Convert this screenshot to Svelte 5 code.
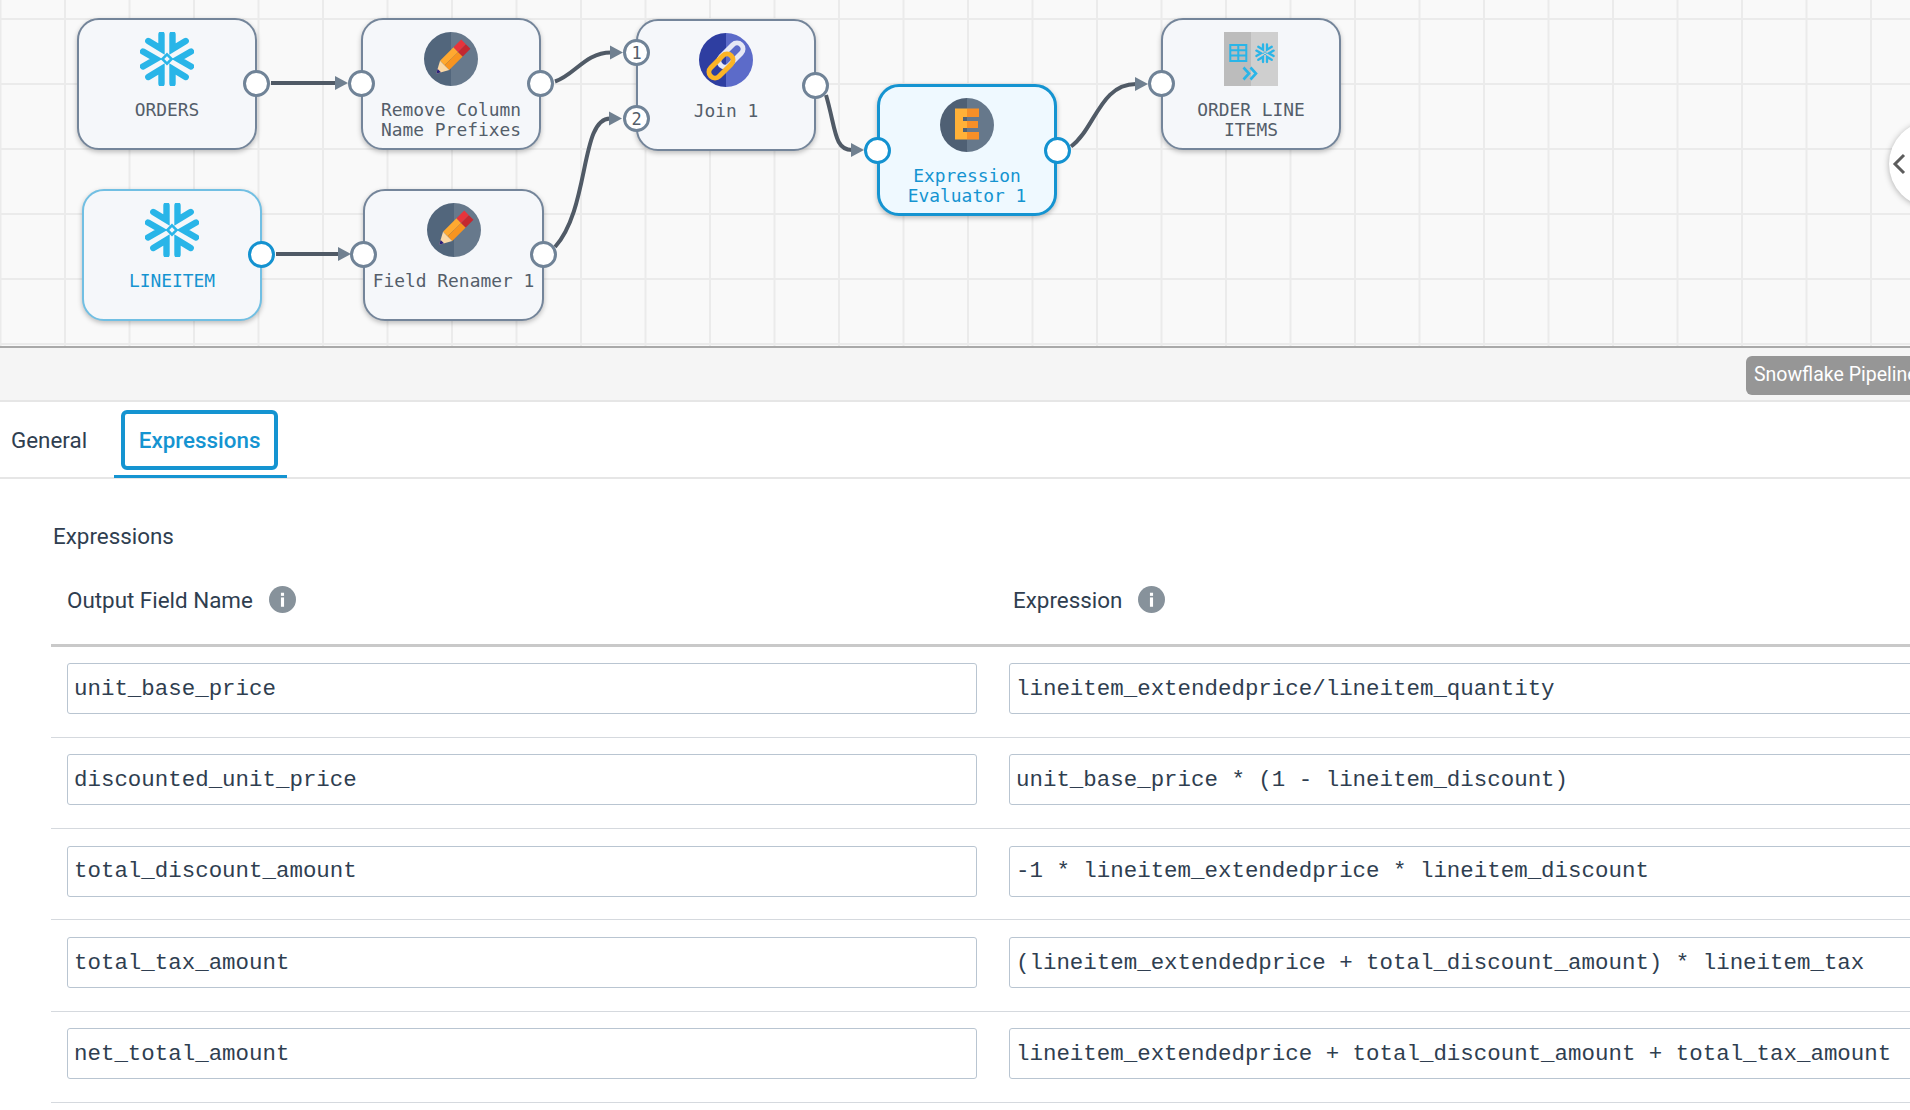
<script lang="ts">
	type Node = { x: number; y: number; w: number; h: number; lines: string[]; icon: string; state?: string };
	type Port = { x: number; y: number; label?: string; state?: string };

	const nodes: Node[] = [
		{ x: 77, y: 18, w: 180, h: 132, lines: ['ORDERS'], icon: 'snow' },
		{ x: 361, y: 18, w: 180, h: 132, lines: ['Remove Column', 'Name Prefixes'], icon: 'pencil' },
		{ x: 82, y: 189, w: 180, h: 132, lines: ['LINEITEM'], icon: 'snow', state: 'picked' },
		{ x: 363, y: 189, w: 181, h: 132, lines: ['Field Renamer 1'], icon: 'pencil' },
		{ x: 636, y: 19, w: 180, h: 132, lines: ['Join 1'], icon: 'join' },
		{ x: 877, y: 84, w: 180, h: 132, lines: ['Expression', 'Evaluator 1'], icon: 'expr', state: 'active' },
		{ x: 1161, y: 18, w: 180, h: 132, lines: ['ORDER LINE', 'ITEMS'], icon: 'target' }
	];

	const ports: Port[] = [
		{ x: 256.5, y: 83 },
		{ x: 361.5, y: 83 },
		{ x: 540.5, y: 83 },
		{ x: 261.5, y: 254, state: 'active' },
		{ x: 363.5, y: 254 },
		{ x: 543.5, y: 254 },
		{ x: 636.5, y: 52.5, label: '1' },
		{ x: 636.5, y: 118.5, label: '2' },
		{ x: 815, y: 85 },
		{ x: 877.5, y: 150, state: 'active' },
		{ x: 1057, y: 150, state: 'active' },
		{ x: 1161, y: 83 }
	];

	const edges = [
		'M271 83 L336 83',
		'M276 254 L339 254',
		'M555 81.5 C575 75 585 52.5 611 52.5',
		'M555 247 C590 208 580 118.5 610 118.5',
		'M826 95 C836 129 834 150 852 150',
		'M1071 146.5 C1095 129 1100 84 1136 84'
	];

	const arrows = [
		[335, 83],
		[338, 254],
		[610, 52.5],
		[609, 118.5],
		[851, 150],
		[1135, 84]
	];

	const rows = [
		['unit_base_price', 'lineitem_extendedprice/lineitem_quantity'],
		['discounted_unit_price', 'unit_base_price * (1 - lineitem_discount)'],
		['total_discount_amount', '-1 * lineitem_extendedprice * lineitem_discount'],
		['total_tax_amount', '(lineitem_extendedprice + total_discount_amount) * lineitem_tax'],
		['net_total_amount', 'lineitem_extendedprice + total_discount_amount + total_tax_amount']
	];

	const flake = [
		'M-18.7 -18 L-5.5 -10 L-5.5 -24.5',
		'M18.7 -18 L5.5 -10 L5.5 -24.5',
		'M-18.7 18 L-5.5 10 L-5.5 24.5',
		'M18.7 18 L5.5 10 L5.5 24.5',
		'M-24 -7.5 L-11 0 L-24 7.5',
		'M24 -7.5 L11 0 L24 7.5'
	];
</script>

{#snippet snowflake(scale: number, cx: number, cy: number)}
	<g transform="translate({cx} {cy}) scale({scale})">
		{#each flake as d}
			<path {d} fill="none" stroke="#29b5e8" stroke-width="6.4" stroke-linecap="round" stroke-linejoin="miter" />
		{/each}
		<path d="M0 -4.6 L4.6 0 L0 4.6 L-4.6 0 Z" fill="none" stroke="#29b5e8" stroke-width="2.6" />
	</g>
{/snippet}

{#snippet halfDisc(left: string, right: string)}
	<path d="M27 0 A27 27 0 0 0 27 54 Z" fill={left} />
	<path d="M27 0 A27 27 0 0 1 27 54 Z" fill={right} />
{/snippet}

{#snippet nodeIcon(kind: string)}
	<svg class="icon" width="54" height="54" viewBox="0 0 54 54">
		{#if kind === 'snow'}
			{@render snowflake(1, 27, 27)}
		{:else if kind === 'pencil'}
			{@render halfDisc('#52667c', '#67798c')}
			<g transform="translate(27 27) rotate(-45)">
				<path d="M-9 -6.5 L10 -6.5 L10 0 L-9 0 Z" fill="#ffa930" />
				<path d="M-9 0 L10 0 L10 6.5 L-9 6.5 Z" fill="#f8941f" />
				<path d="M10 -6.5 L21 -6.5 L21 0 L10 0 Z" fill="#e8343b" />
				<path d="M10 0 L21 0 L21 6.5 L10 6.5 Z" fill="#c4282f" />
				<path d="M-9 -6.5 L-9 6.5 L-21 0 Z" fill="#fbd8a5" />
				<path d="M-16.5 -2.4 L-16.5 2.4 L-21 0 Z" fill="#2a1f7c" />
			</g>
		{:else if kind === 'join'}
			{@render halfDisc('#2e3ea1', '#5c6bc9')}
			<rect x="26" y="7.5" width="12" height="29" rx="6" transform="rotate(45 32 22)" fill="none" stroke="#e6e8f5" stroke-width="5" />
			<rect x="16" y="18.5" width="12" height="29" rx="6" transform="rotate(45 22 33)" fill="none" stroke="#fcb426" stroke-width="5" />
		{:else if kind === 'expr'}
			{@render halfDisc('#4f6074', '#66788b')}
			<path d="M15 10.5 H27 V41.5 H15 Z" fill="#ffb138" />
			<path d="M27 10.5 H39 V19 H27 Z M27 23 H38 V30 H27 Z M27 34 H39 V41.5 H27 Z" fill="#f78f27" />
			<path d="M23 19 H27 V23 H23 Z M23 30 H27 V34 H23 Z" fill="#4f6074" />
		{:else}
			<rect width="27" height="54" fill="#bcbcbc" />
			<rect x="27" width="27" height="54" fill="#cfcfcf" />
			<g fill="none" stroke="#29b5e8" stroke-width="2">
				<rect x="6.3" y="13" width="16" height="16" />
				<path d="M6.3 18.3 H22.3 M6.3 23.6 H22.3 M14.3 13 V29" />
			</g>
			{@render snowflake(0.36, 41, 21.3)}
			<path d="M19.5 35.5 L25 41.5 L19.5 47.5 M26.5 35.5 L32 41.5 L26.5 47.5" fill="none" stroke="#29b5e8" stroke-width="2.6" />
		{/if}
	</svg>
{/snippet}

{#snippet info()}
	<svg class="info" width="27" height="27" viewBox="0 0 26 26">
		<circle cx="13" cy="13" r="13" fill="#87929b" />
		<rect x="11.5" y="11" width="3" height="9" fill="#fff" />
		<rect x="11.5" y="6.5" width="3" height="3" fill="#fff" />
	</svg>
{/snippet}

<div class="page">
	<section class="canvas">
		<svg class="edges" width="1910" height="347">
			{#each edges as d}
				<path {d} fill="none" stroke="#505a66" stroke-width="4" />
			{/each}
			{#each arrows as [x, y]}
				<path d="M{x} {y - 7} L{x + 13} {y} L{x} {y + 7} Z" fill="#708090" />
			{/each}
		</svg>

		{#each nodes as n}
			<div class="node {n.state ?? ''}" style="left:{n.x}px;top:{n.y}px;width:{n.w}px;height:{n.h}px">
				{@render nodeIcon(n.icon)}
				<div class="label">
					{#each n.lines as line}
						<div>{line}</div>
					{/each}
				</div>
			</div>
		{/each}

		{#each ports as p}
			<div class="port {p.state ?? ''}" style="left:{p.x}px;top:{p.y}px">{p.label ?? ''}</div>
		{/each}

		<button class="collapse" aria-label="Collapse">
			<svg width="14" height="22" viewBox="0 0 14 22">
				<path d="M12 2 L3 11 L12 20" fill="none" stroke="#5c5c5c" stroke-width="3" />
			</svg>
		</button>
	</section>

	<div class="band">
		<span class="badge">Snowflake Pipeline</span>
	</div>

	<nav class="tabs">
		<button class="tab">General</button>
		<button class="tab selected"><span>Expressions</span></button>
	</nav>

	<main class="content">
		<h2>Expressions</h2>
		<div class="row head">
			<div class="cell">Output Field Name {@render info()}</div>
			<div class="cell">Expression {@render info()}</div>
		</div>
		{#each rows as [name, expr]}
			<div class="row">
				<input value={name} readonly />
				<input class="wide" value={expr} readonly />
			</div>
		{/each}
	</main>
</div>

<style>
	:global(body) {
		margin: 0;
		overflow: hidden;
		background: #fff;
	}

	.page {
		width: 1910px;
		height: 1110px;
		overflow: hidden;
		font-family: Roboto, sans-serif;
		color: #2f3e50;
	}

	/* ── canvas ── */
	.canvas {
		position: relative;
		height: 346px;
		overflow: hidden;
		border-bottom: 2px solid #a9a9a9;
		background-color: #f9f9f9;
		background-image:
			linear-gradient(to right, #ebebeb 2px, transparent 2px),
			linear-gradient(to bottom, #ebebeb 2px, transparent 2px);
		background-size: 64.5px 65px;
		background-position: 64px 18px;
	}

	.edges {
		position: absolute;
		inset: 0;
	}

	.node {
		position: absolute;
		box-sizing: border-box;
		display: flex;
		flex-direction: column;
		align-items: center;
		padding-top: 12px;
		background: #f5f7fa;
		border: 2px solid #74859a;
		border-radius: 22px;
		box-shadow: 0 2px 5px rgba(0, 0, 0, 0.25);
	}

	.node.picked {
		border-color: #71bfe3;
	}

	.node.active {
		background: #eff9ff;
		border: 3px solid #1594d1;
		padding-top: 11px;
	}

	.icon {
		flex-shrink: 0;
	}

	.label {
		margin-top: 14px;
		font-family: 'DejaVu Sans Mono', monospace;
		font-size: 17.9px;
		line-height: 20.2px;
		text-align: center;
		white-space: nowrap;
		color: #545e6a;
	}

	.picked .label,
	.active .label {
		color: #1594d1;
	}

	.port {
		position: absolute;
		box-sizing: border-box;
		width: 27px;
		height: 27px;
		margin: -13.5px 0 0 -13.5px;
		display: flex;
		align-items: center;
		justify-content: center;
		background: #fff;
		border: 3px solid #708397;
		border-radius: 50%;
		font-family: 'DejaVu Sans Mono', monospace;
		font-size: 17px;
		color: #545e6a;
	}

	.port.active {
		border-color: #1492d0;
	}

	.collapse {
		position: absolute;
		left: 1889px;
		top: 121px;
		width: 86px;
		height: 86px;
		padding: 0 0 0 3px;
		display: flex;
		align-items: center;
		background: #fff;
		border: none;
		border-radius: 50%;
		box-shadow: 0 1px 6px rgba(0, 0, 0, 0.3);
	}

	/* ── band ── */
	.band {
		height: 52px;
		display: flex;
		align-items: center;
		justify-content: flex-end;
		background: #f5f5f5;
		border-bottom: 2px solid #e6e6e6;
		overflow: hidden;
	}

	.badge {
		flex-shrink: 0;
		box-sizing: border-box;
		width: 200px;
		margin: 2px -36px 0 0;
		height: 39px;
		line-height: 38px;
		padding-left: 8px;
		background: #969696;
		border-radius: 6px;
		color: #fff;
		font-size: 19.5px;
		white-space: nowrap;
	}

	/* ── tabs ── */
	.tabs {
		height: 77px;
		display: flex;
		box-sizing: border-box;
		border-bottom: 2px solid #e6e6e6;
	}

	.tab {
		padding: 0 11px;
		height: 76px;
		margin-right: 16px;
		background: none;
		border: none;
		font: 400 22.4px Roboto, sans-serif;
		color: #2f3e50;
	}

	.tab.selected {
		box-sizing: border-box;
		width: 173px;
		padding: 8px 9px 5px 7px;
		margin-right: 0;
		color: #1594d1;
		font-weight: 500;
		border-bottom: 3px solid #1594d1;
	}

	.tab.selected span {
		display: flex;
		align-items: center;
		justify-content: center;
		box-sizing: border-box;
		height: 60px;
		border: 4px solid #1594d1;
		border-radius: 6px;
	}

	/* ── expressions table ── */
	.content {
		padding: 40px 0 0 51px;
	}

	h2 {
		margin: 0 0 0 2px;
		font-size: 22.4px;
		font-weight: 400;
		line-height: 34px;
	}

	.row {
		box-sizing: border-box;
		display: grid;
		grid-template-columns: 910px 1000px;
		column-gap: 32px;
		height: 91.3px;
		padding: 0 0 6px 16px;
		align-items: center;
		border-bottom: 1px solid #d5d9de;
	}

	.row.head {
		height: 90.5px;
		margin-top: 3px;
		padding-bottom: 0;
		border-bottom: 3px solid #c9c9c9;
	}

	.cell {
		display: flex;
		align-items: center;
		gap: 16px;
		font-size: 22.4px;
	}

	.cell:last-child {
		margin-left: 4px;
	}

	input {
		box-sizing: border-box;
		width: 100%;
		height: 51px;
		padding: 0 6px;
		background: #fff;
		border: 1px solid #b9c5d1;
		border-radius: 3px;
		outline: none;
		font-family: 'Liberation Mono', monospace;
		font-size: 22.45px;
		color: #2f3e50;
	}
</style>
